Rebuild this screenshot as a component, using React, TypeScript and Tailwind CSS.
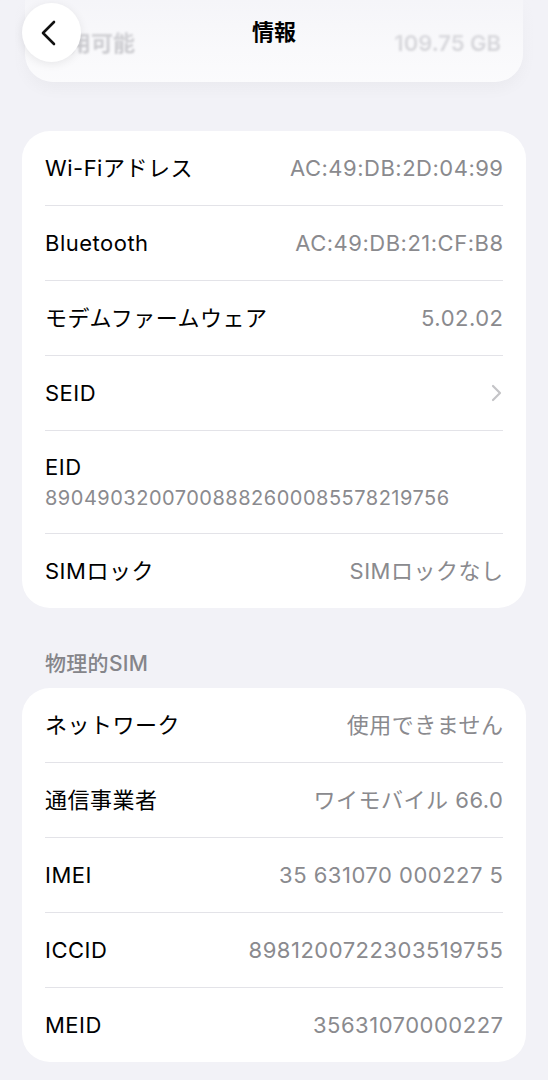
import type { ReactNode } from "react";

const FONT = {
  fontFamily: 'Inter, "Noto Sans CJK JP", "Noto Sans", sans-serif',
};

function Row({
  label,
  value,
  chevron,
  last,
}: {
  label: string;
  value?: string;
  chevron?: boolean;
  last?: boolean;
}) {
  return (
    <div
      className={`flex items-center justify-between ${
        last ? "h-[74px]" : "h-[75px] border-b border-[#e3e3e8]"
      }`}
    >
      <span className="text-[22px] leading-[28px] tracking-[0.5px] text-black">
        {label}
      </span>
      {value && (
        <span className="-mr-[0.5px] text-[22px] leading-[28px] tracking-[0.5px] text-[#8a8a8e]">
          {value}
        </span>
      )}
      {chevron && (
        <svg
          width="11"
          height="18"
          viewBox="0 0 11 18"
          fill="none"
          className="mr-[1px]"
        >
          <path
            d="M2 2l7 7-7 7"
            stroke="#c4c4c7"
            strokeWidth="2.2"
            strokeLinecap="round"
            strokeLinejoin="round"
          />
        </svg>
      )}
    </div>
  );
}

function Card({ children }: { children: ReactNode }) {
  return (
    <div className="mx-[22px] rounded-[28px] bg-white px-[23px]">
      {children}
    </div>
  );
}

export default function App() {
  return (
    <div
      className="relative min-h-screen overflow-hidden bg-[#f2f2f7] pb-[20px]"
      style={FONT}
    >
      {/* card scrolled under the nav bar */}
      <div className="mx-[25px] flex h-[82px] items-end justify-between rounded-b-[28px] bg-white/80 px-[22px] pb-[22px] shadow-[0_6px_16px_rgba(0,0,0,0.04)]">
        <span className="text-[22px] font-semibold text-[#b8b8bc] blur-[1.2px]">
          利用可能
        </span>
        <span className="text-[22px] font-semibold text-[#c8c8cc] blur-[1.2px]">
          109.75 GB
        </span>
      </div>

      <div className="mt-[49px]">
        <Card>
          <Row label="Wi-Fiアドレス" value="AC:49:DB:2D:04:99" />
          <Row label="Bluetooth" value="AC:49:DB:21:CF:B8" />
          <Row label="モデムファームウェア" value="5.02.02" />
          <Row label="SEID" chevron />
          <div className="border-b border-[#e3e3e8] pt-[22px] pb-[22px]">
            <div className="text-[22px] leading-[28px] tracking-[0.5px] text-black">
              EID
            </div>
            <div className="mt-[4px] text-[20px] leading-[26px] tracking-[0.5px] text-[#8a8a8e]">
              89049032007008882600085578219756
            </div>
          </div>
          <Row label="SIMロック" value="SIMロックなし" last />
        </Card>

        <div className="px-[45px] pt-[43px] pb-[11px] text-[21px] leading-[26px] font-medium tracking-[0.3px] text-[#85858a]">
          物理的SIM
        </div>

        <Card>
          <Row label="ネットワーク" value="使用できません" />
          <Row label="通信事業者" value="ワイモバイル 66.0" />
          <Row label="IMEI" value="35 631070 000227 5" />
          <Row label="ICCID" value="8981200722303519755" />
          <Row label="MEID" value="35631070000227" last />
        </Card>
      </div>

      {/* nav bar overlay */}
      <div className="pointer-events-none absolute inset-x-0 top-0 h-[100px] bg-gradient-to-b from-[#f2f2f7]/70 via-[#f2f2f7]/30 to-transparent" />
      <div className="absolute inset-x-0 top-0 flex h-[64px] items-center justify-center">
        <span className="text-[22px] font-semibold text-black">情報</span>
      </div>
      <button className="absolute top-[3px] left-[22px] flex size-[59px] items-center justify-center rounded-full bg-white shadow-[0_2px_10px_rgba(0,0,0,0.08)]">
        <svg width="18" height="26" viewBox="0 0 18 26" fill="none" className="-ml-[6px]">
          <path
            d="M14 2L3 13l11 11"
            stroke="#111"
            strokeWidth="2.6"
            strokeLinecap="round"
            strokeLinejoin="round"
          />
        </svg>
      </button>
    </div>
  );
}
